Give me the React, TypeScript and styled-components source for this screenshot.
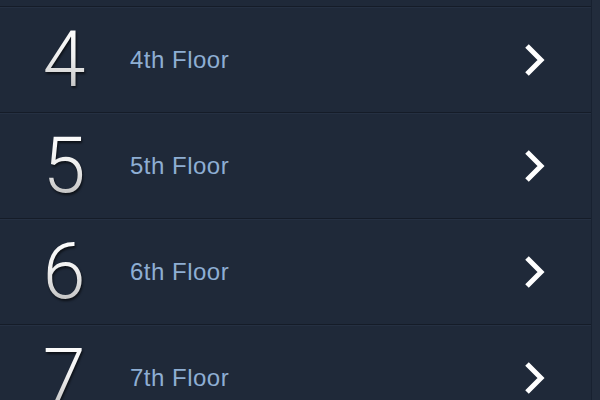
import React from "react";
import styled, { createGlobalStyle } from "styled-components";

const Global = createGlobalStyle`
  html, body { margin: 0; padding: 0; background: #1f2939; }
  body { width: 600px; height: 400px; overflow: hidden; font-family: "Liberation Sans", Arial, sans-serif; }
`;

const Screen = styled.div`
  width: 600px;
  height: 400px;
  overflow: hidden;
  display: flex;
  background: #1f2939;
`;

const List = styled.div`
  width: 591px;
  display: flex;
  flex-direction: column;
  border-right: 1px solid #182130;
  flex-shrink: 0;
`;

const Edge = styled.div`
  flex: 1;
  background: #222c3c;
`;

const TopStub = styled.div`
  height: 6px;
  flex-shrink: 0;
`;

const Row = styled.div`
  height: 105px;
  flex-shrink: 0;
  display: flex;
  align-items: center;
  border-top: 1px solid #151c28;
  box-shadow: inset 0 1px 0 #253042;
  box-sizing: content-box;
`;

const Digit = styled.div`
  width: 80px;
  margin-left: 24px;
  text-align: center;
  font-family: Roboto, "Liberation Sans", sans-serif;
  font-weight: 350;
  font-size: 77px;
  line-height: 1;
  background: linear-gradient(180deg, #ffffff 0%, #f0f0f0 45%, #b4b4b4 100%);
  -webkit-background-clip: text;
  background-clip: text;
  color: transparent;
  filter: drop-shadow(1px 2px 1px rgba(0, 0, 0, 0.6));
  margin-top: 2px;
`;

const Label = styled.div`
  margin-left: 26px;
  flex: 1;
  font-size: 24px;
  letter-spacing: 0.5px;
  color: #8eaed3;
`;

const Chevron = styled.svg`
  width: 30px;
  height: 40px;
  margin-right: 40px;
`;

const floors = [
  { n: "4", label: "4th Floor" },
  { n: "5", label: "5th Floor" },
  { n: "6", label: "6th Floor" },
  { n: "7", label: "7th Floor" },
];

export default function App() {
  return (
    <>
      <Global />
      <Screen>
        <List>
          <TopStub />
          {floors.map((f) => (
            <Row key={f.n}>
              <Digit>{f.n}</Digit>
              <Label>{f.label}</Label>
              <Chevron viewBox="0 0 30 40">
                <polyline
                  points="6,6 20,20 6,34"
                  fill="none"
                  stroke="#ffffff"
                  strokeWidth="5"
                  strokeLinecap="butt"
                  strokeLinejoin="miter"
                />
              </Chevron>
            </Row>
          ))}
        </List>
        <Edge />
      </Screen>
    </>
  );
}
